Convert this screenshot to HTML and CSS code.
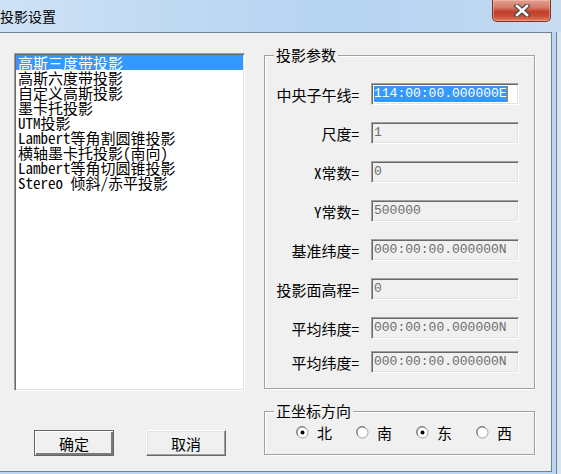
FILE: index.html
```html
<!DOCTYPE html>
<html lang="zh-CN">
<head>
<meta charset="utf-8">
<title>投影设置</title>
<link rel="stylesheet" href="styles.css">
</head>
<body>
<div class="window">
  <header class="titlebar">
    <span class="title">投影设置</span>
    <button class="close" aria-label="关闭">
      <svg width="18" height="13" viewBox="0 0 18 13">
        <path d="M4 2 L14 11 M14 2 L4 11" stroke="#4a4a4a" stroke-width="5" stroke-linecap="square" fill="none"/>
        <path d="M4 2 L14 11 M14 2 L4 11" stroke="#ffffff" stroke-width="2.6" stroke-linecap="square" fill="none"/>
      </svg>
    </button>
  </header>
  <main class="client">
    <section class="left">
      <ul class="listbox">
        <li class="item selected">高斯三度带投影</li>
        <li class="item">高斯六度带投影</li>
        <li class="item">自定义高斯投影</li>
        <li class="item">墨卡托投影</li>
        <li class="item">UTM投影</li>
        <li class="item">Lambert等角割圆锥投影</li>
        <li class="item">横轴墨卡托投影(南向)</li>
        <li class="item">Lambert等角切圆锥投影</li>
        <li class="item">Stereo 倾斜/赤平投影</li>
      </ul>
      <div class="buttons">
        <button class="btn btn-default">确定</button>
        <button class="btn">取消</button>
      </div>
    </section>
    <section class="right">
      <fieldset class="group params">
        <legend>投影参数</legend>
        <div class="row">
          <span class="label">中央子午线=</span>
          <div class="field active"><span class="sel">114:00:00.000000E</span><span class="caret"></span></div>
        </div>
        <div class="row">
          <span class="label">尺度=</span>
          <div class="field">1</div>
        </div>
        <div class="row">
          <span class="label">X常数=</span>
          <div class="field">0</div>
        </div>
        <div class="row">
          <span class="label">Y常数=</span>
          <div class="field">500000</div>
        </div>
        <div class="row">
          <span class="label">基准纬度=</span>
          <div class="field">000:00:00.000000N</div>
        </div>
        <div class="row">
          <span class="label">投影面高程=</span>
          <div class="field">0</div>
        </div>
        <div class="row">
          <span class="label">平均纬度=</span>
          <div class="field">000:00:00.000000N</div>
        </div>
        <div class="row row-tight">
          <span class="label">平均纬度=</span>
          <div class="field">000:00:00.000000N</div>
        </div>
      </fieldset>
      <fieldset class="group dirs">
        <legend>正坐标方向</legend>
        <div class="radios">
          <label class="radio"><svg class="dot" width="13" height="13" viewBox="0 0 13 13"><circle cx="6.5" cy="6.5" r="5.5" fill="#fff" stroke="#a0a0a0"/><path d="M2.2 9.5 A5 5 0 0 1 9.5 2.2" stroke="#696969" fill="none"/><circle cx="6.5" cy="6.5" r="2" fill="#000"/></svg><span>北</span></label>
          <label class="radio"><svg class="dot" width="13" height="13" viewBox="0 0 13 13"><circle cx="6.5" cy="6.5" r="5.5" fill="#fff" stroke="#a0a0a0"/><path d="M2.2 9.5 A5 5 0 0 1 9.5 2.2" stroke="#696969" fill="none"/></svg><span>南</span></label>
          <label class="radio"><svg class="dot" width="13" height="13" viewBox="0 0 13 13"><circle cx="6.5" cy="6.5" r="5.5" fill="#fff" stroke="#a0a0a0"/><path d="M2.2 9.5 A5 5 0 0 1 9.5 2.2" stroke="#696969" fill="none"/><circle cx="6.5" cy="6.5" r="2" fill="#000"/></svg><span>东</span></label>
          <label class="radio"><svg class="dot" width="13" height="13" viewBox="0 0 13 13"><circle cx="6.5" cy="6.5" r="5.5" fill="#fff" stroke="#a0a0a0"/><path d="M2.2 9.5 A5 5 0 0 1 9.5 2.2" stroke="#696969" fill="none"/></svg><span>西</span></label>
        </div>
      </fieldset>
    </section>
  </main>
</div>
</body>
</html>
```
FILE: styles.css
```css
* { box-sizing: border-box; }
html, body { margin: 0; padding: 0; }
body {
  width: 561px;
  height: 474px;
  overflow: hidden;
  background: #bcd5ef;
  font-family: "Noto Sans Mono CJK SC", "Liberation Mono", "Noto Sans CJK SC", monospace;
  font-size: 15px;
  color: #000;
}
.window {
  display: flex;
  flex-direction: column;
  width: 561px;
  height: 474px;
  background: linear-gradient(to right, #bcd5ef 0, #bcd5ef 556px, #6f8196 556px, #6f8196 557px, #d7e4f2 557px);
}
.titlebar {
  height: 32px;
  display: flex;
  justify-content: space-between;
  align-items: flex-start;
  padding-right: 10px;
  background: linear-gradient(to right, #cfe2f6 0%, #c0daf3 30%, #b5d3f2 60%, #bdd7f1 85%, #c9ddf2 100%);
}
.title {
  font-family: "Noto Sans CJK SC", sans-serif;
  font-size: 14px;
  line-height: 14px;
  margin-top: 9px;
  margin-left: 0;
  color: #000;
}
.close {
  width: 59px;
  height: 22px;
  padding: 0;
  border: 1px solid #7b3228;
  border-top: none;
  border-radius: 0 0 5px 5px;
  background: linear-gradient(to bottom, #e2a091 0%, #d57b68 35%, #c0412c 55%, #c94a33 75%, #e27a5c 100%);
  display: flex;
  align-items: center;
  justify-content: center;
  box-shadow: inset 0 0 0 1px rgba(255, 200, 190, 0.45);
}
.client {
  width: 552px;
  height: 440px;
  border: 1px solid #6f8196;
  border-left: none;
  background: #f0f0f0;
  display: flex;
}
.left {
  padding: 20px 0 0 14px;
  width: 245px;
  display: flex;
  flex-direction: column;
}
.listbox {
  list-style: none;
  margin: 0;
  padding: 1px;
  width: 231px;
  height: 338px;
  background: #fff;
  border: 1px solid;
  border-color: #a0a0a0 #ffffff #ffffff #a0a0a0;
  box-shadow: inset 1px 1px 0 #696969, inset -1px -1px 0 #e3e3e3;
}
.item {
  height: 15px;
  line-height: 15px;
  padding-left: 2px;
  white-space: nowrap;
  font-size: 15px;
}
.item.selected {
  background: #3399ff;
  color: #fff;
}
.buttons {
  display: flex;
  gap: 32px;
  padding-left: 20px;
  margin-top: 39px;
}
.btn {
  width: 80px;
  height: 26px;
  padding: 0;
  font-family: inherit;
  font-size: 15px;
  line-height: 15px;
  color: #000;
  background: #f0f0f0;
  border: 1px solid;
  border-color: #ffffff #696969 #696969 #ffffff;
  box-shadow: inset -1px -1px 0 #a0a0a0, inset 1px 1px 0 #e3e3e3;
}
.btn-default {
  border-color: #646464;
  box-shadow: inset 1px 1px 0 #ffffff, inset -2px -2px 0 #7a7a7a;
}
.right {
  padding-top: 14px;
  margin-left: 19px;
  display: flex;
  flex-direction: column;
}
.group {
  margin: 0;
  width: 271px;
  border: 1px solid #a0a0a0;
  box-shadow: inset 1px 1px 0 #fff, 1px 1px 0 #fff;
  min-width: 0;
}
.group legend {
  margin-left: 9px;
  padding: 0 2px;
  font-family: "Noto Sans CJK SC", sans-serif;
  font-size: 15px;
  line-height: 16px;
  height: 16px;
  background: #f0f0f0;
}
.params {
  height: 342px;
  padding: 20px 0 0 0;
  display: flex;
  flex-direction: column;
  gap: 17px;
}
.row {
  display: flex;
  align-items: center;
  height: 22px;
}
.row-tight { margin-top: -5px; }
.label {
  width: 94px;
  margin-right: 12px;
  text-align: right;
  white-space: nowrap;
  font-size: 15px;
}
.field {
  width: 148px;
  height: 22px;
  padding: 2px 0 0 2px;
  font-family: "Liberation Mono", monospace;
  font-size: 13px;
  line-height: 16px;
  color: #6d6d6d;
  background: #f0f0f0;
  border: 1px solid;
  border-color: #a0a0a0 #ffffff #ffffff #a0a0a0;
  box-shadow: inset 1px 1px 0 #696969, inset -1px -1px 0 #e3e3e3;
  white-space: nowrap;
  overflow: hidden;
  display: flex;
  align-items: flex-start;
}
.field.active {
  background: #fff;
  color: #fff;
}
.sel {
  background: #3399ff;
  color: #fff;
  height: 16px;
}
.caret {
  width: 1px;
  height: 16px;
  background: #c8741e;
}
.dirs {
  margin-top: 14px;
  height: 52px;
  padding: 6px 0 0 0;
}
.radios {
  display: flex;
  gap: 24px;
  align-items: center;
  height: 15px;
  padding-left: 31px;
}
.radio {
  display: flex;
  align-items: center;
  gap: 8px;
  font-family: "Noto Sans CJK SC", sans-serif;
  font-size: 15px;
  line-height: 15px;
}
.dot { display: block; }
```
